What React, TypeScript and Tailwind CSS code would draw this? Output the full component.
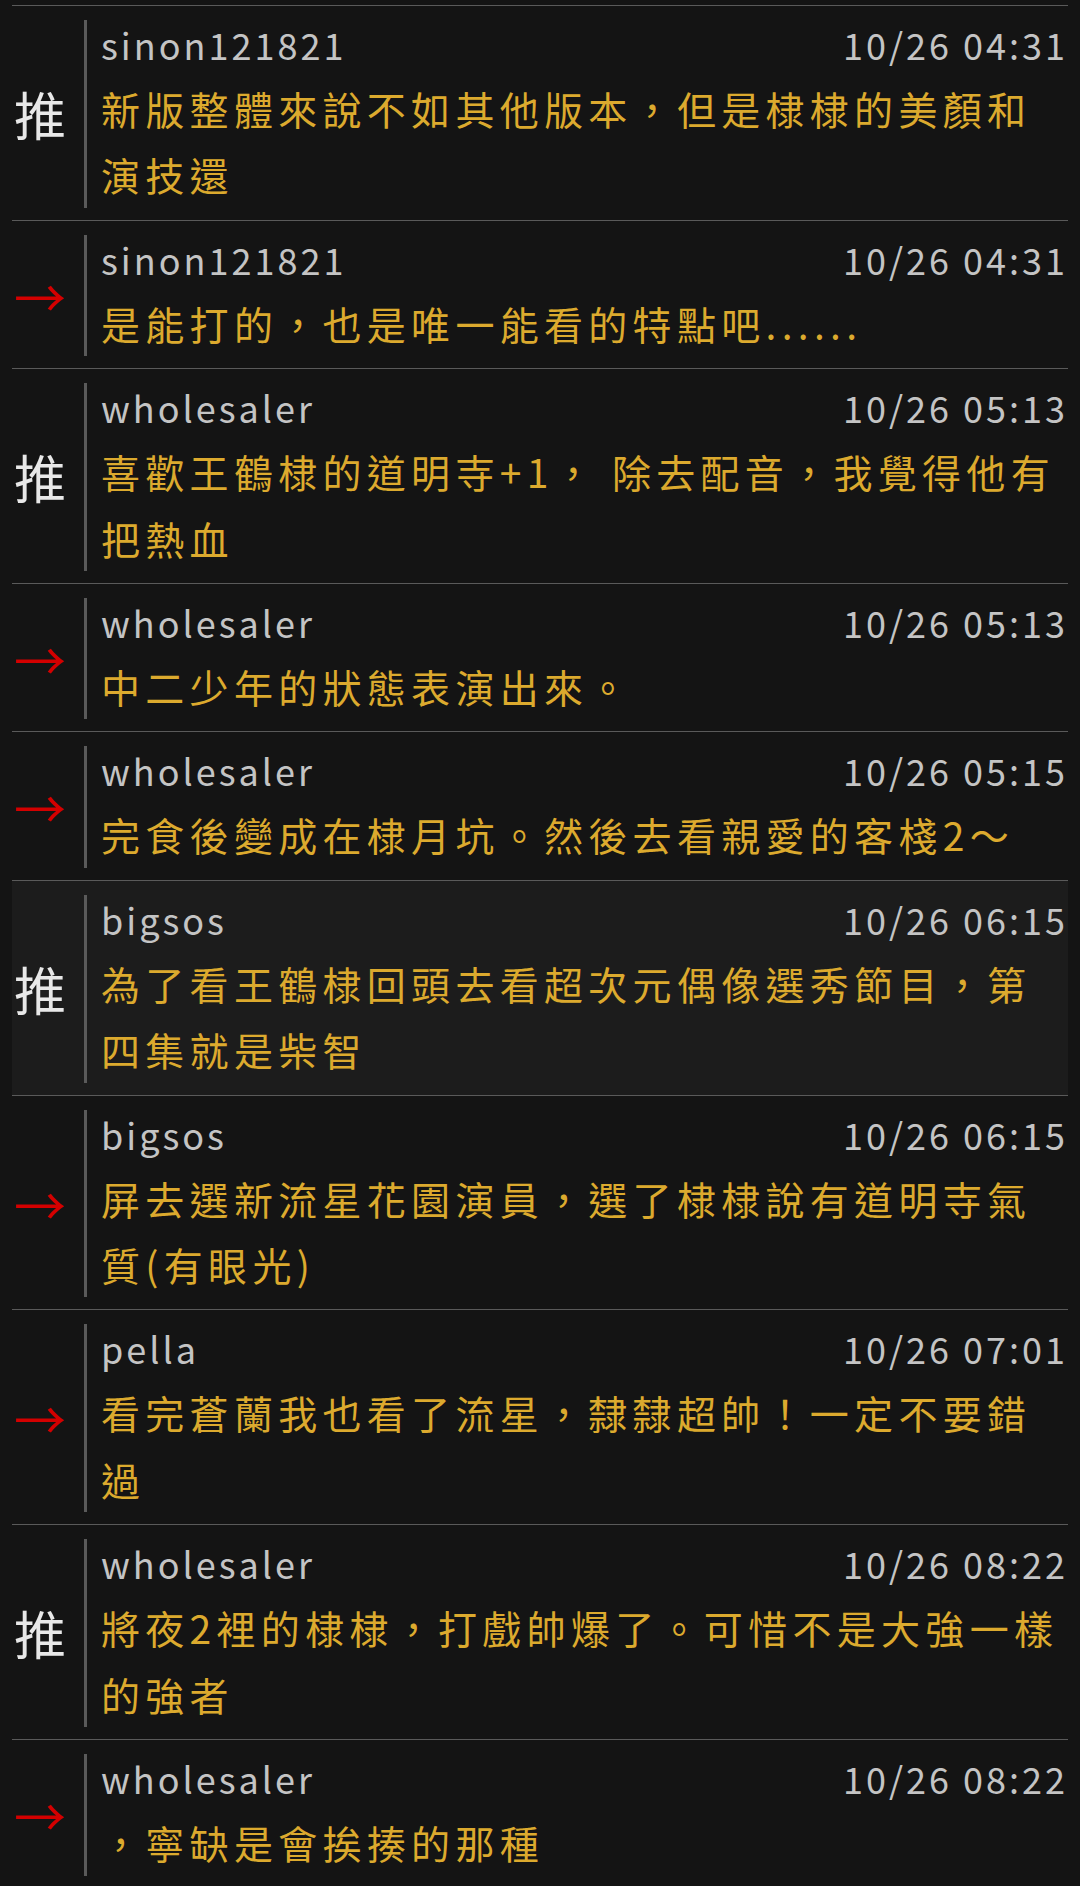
type Push = {
  tag: "推" | "→";
  user: string;
  time: string;
  text: string;
  hl?: boolean;
};

const pushes: Push[] = [
  { tag: "推", user: "sinon121821", time: "10/26 04:31", text: "新版整體來說不如其他版本，但是棣棣的美顏和演技還" },
  { tag: "→", user: "sinon121821", time: "10/26 04:31", text: "是能打的，也是唯一能看的特點吧......" },
  { tag: "推", user: "wholesaler", time: "10/26 05:13", text: "喜歡王鶴棣的道明寺+1， 除去配音，我覺得他有把熱血" },
  { tag: "→", user: "wholesaler", time: "10/26 05:13", text: "中二少年的狀態表演出來。" },
  { tag: "→", user: "wholesaler", time: "10/26 05:15", text: "完食後變成在棣月坑。然後去看親愛的客棧2～" },
  { tag: "推", user: "bigsos", time: "10/26 06:15", text: "為了看王鶴棣回頭去看超次元偶像選秀節目，第四集就是柴智", hl: true },
  { tag: "→", user: "bigsos", time: "10/26 06:15", text: "屏去選新流星花園演員，選了棣棣說有道明寺氣質(有眼光)" },
  { tag: "→", user: "pella", time: "10/26 07:01", text: "看完蒼蘭我也看了流星，隸隸超帥！一定不要錯過" },
  { tag: "推", user: "wholesaler", time: "10/26 08:22", text: "將夜2裡的棣棣，打戲帥爆了。可惜不是大強一樣的強者" },
  { tag: "→", user: "wholesaler", time: "10/26 08:22", text: "，寧缺是會挨揍的那種" },
];

function PushRow({ p }: { p: Push }) {
  return (
    <div
      className={
        "flex items-stretch border-t border-[#5a5a5a] pt-[14px] pb-[12px] " +
        (p.hl ? "bg-[#1c1c1c]" : "")
      }
    >
      <div className="flex w-[72px] shrink-0 items-center pl-[2px]">
        {p.tag === "推" ? (
          <span className="text-[52px] leading-none text-[#e8e8e8]">推</span>
        ) : (
          <span className="text-[52px] leading-none text-[#d40000]">→</span>
        )}
      </div>
      <div className="min-w-0 flex-1 border-l-[3px] border-[#5a5a5a] pl-[14px]">
        <div className="mb-[7px] flex justify-between text-[36px] leading-[48px] tracking-[3px] text-[#c4c4c4]">
          <span>{p.user}</span>
          <span>{p.time}</span>
        </div>
        <div className="text-[39px] leading-[66.4px] tracking-[5.3px] text-[#dcaa2e]">{p.text}</div>
      </div>
    </div>
  );
}

export default function App() {
  return (
    <div
      className="min-h-[1886px] bg-[#141414] px-3 pt-[5px]"
      style={{ fontFamily: '"Noto Sans CJK TC", "Noto Sans", sans-serif' }}
    >
      {pushes.map((p, i) => (
        <PushRow key={i} p={p} />
      ))}
    </div>
  );
}
